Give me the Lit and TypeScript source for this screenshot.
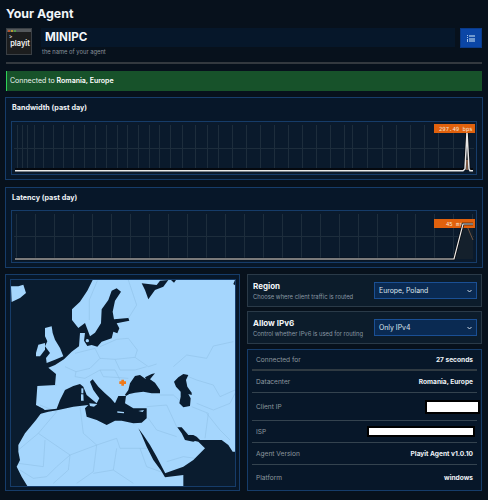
import { LitElement, html, css, svg } from "lit";
import { customElement } from "lit/decorators.js";

const SEA = "#0a1c2f";
const LAND = "#a5d6fd";

const bwGrid = [17, 22, 27, 34, 43, 53, 63, 73, 84, 95, 106, 117, 127, 138, 149, 159, 170, 182, 195, 207, 218, 232, 246, 260, 274, 288, 302, 316, 330, 344, 352, 367, 382, 396, 410, 424, 438, 453, 467];
const ltGrid = [16, 35, 54, 73, 92, 111, 130, 149, 168, 187, 206, 225, 244, 263, 282, 301, 320, 339, 358, 377, 397, 415, 434, 453, 472];

const borders = [
  "M292 32L268 90L268 150",
  "M385 30L410 105L385 145L352 150",
  "M300 230L350 208L385 205L412 240L405 262",
  "M225 250L285 235L300 265L345 268L405 262L445 290L470 282",
  "M195 290L228 305L270 295L300 265",
  "M228 305L225 320L255 325L300 300L345 300L360 330",
  "M300 300L310 320L345 322L385 325",
  "M345 268L360 300L405 300L440 290",
  "M520 290L560 255L620 265L640 228L700 215",
  "M565 320L590 330L640 345L660 380L705 360",
  "M480 375L520 375L560 410",
  "M590 400L640 420L690 400L705 370",
  "M620 430L660 480L690 510",
  "M575 410L625 430L615 505",
  "M440 410L500 405L530 470L590 505",
  "M445 445L470 480L530 500",
  "M120 405L170 425L115 490L55 540",
  "M240 410L250 490L290 525L350 505L360 535L440 535",
  "M115 490L210 555L290 525L280 605L230 640",
  "M55 580L130 590L135 510",
  "M60 600L100 625L140 620L170 590L210 555L205 600L160 640",
  "M340 600L350 535M340 600L400 640M340 600L280 610",
  "M420 535L440 590L495 610",
  "M500 575L550 560L585 565",
  "M115 345L170 345",
];

function vlines(xs: number[], y1: number, y2: number) {
  return xs.map((x) => svg`<line x1=${x} x2=${x} y1=${y1} y2=${y2}></line>`);
}

@customElement("app-root")
export class AppRoot extends LitElement {
  static styles = css`
    :host {
      display: block;
      width: 488px;
      height: 500px;
      overflow: hidden;
      background: #07111c;
      font-family: Inter, "Liberation Sans", sans-serif;
      color: #fff;
    }
    .page {
      padding: 7px 6px 0 6px;
      display: flex;
      flex-direction: column;
    }
    h1 {
      margin: 0;
      font-size: 12.4px;
      line-height: 14px;
      font-weight: 700;
      color: #f1f5f9;
    }
    .head {
      display: flex;
      gap: 9px;
      margin-top: 7px;
      align-items: flex-start;
    }
    .logo {
      width: 26px;
      height: 27px;
      background: #1c1d1e;
      border: 1px solid #3a3f44;
      box-sizing: border-box;
      display: flex;
      flex-direction: column;
      flex: none;
    }
    .logobar {
      height: 3px;
      background: #54585c;
      display: flex;
      gap: 1px;
      align-items: center;
      padding-left: 1px;
    }
    .logobar i {
      width: 2px;
      height: 2px;
      background: #b5532f;
    }
    .logobar i:nth-child(2) {
      background: #b59a2f;
    }
    .logobar i:nth-child(3) {
      background: #4f9a4a;
    }
    .logobody {
      flex: 1;
      padding: 2px 0 0 2px;
      font-size: 7.4px;
      line-height: 7px;
      font-weight: 600;
      color: #f2f2f2;
    }
    .logobody b {
      display: block;
      font-size: 5px;
      line-height: 4px;
      font-weight: 600;
    }
    .logobody span {
      display: block;
      text-align: center;
      margin-top: 2px;
    }
    .namewrap {
      flex: 1;
      min-width: 0;
    }
    .name {
      height: 19px;
      background: #06172a;
      padding-left: 4px;
      font-size: 11.6px;
      line-height: 19px;
      font-weight: 700;
      color: #f4f8fc;
    }
    .hint {
      font-size: 5.8px;
      line-height: 8px;
      margin: 1px 0 0 1px;
      color: #8a939c;
    }
    .btn {
      width: 22px;
      height: 20px;
      flex: none;
      margin-left: -4px;
      box-sizing: border-box;
      background: #0b46a6;
      border: 1px solid #0a3a88;
      display: flex;
      align-items: center;
      justify-content: center;
    }
    hr {
      border: 0;
      height: 2px;
      background: #33393f;
      margin: 6px 0 0 0;
    }
    .alert {
      margin-top: 7px;
      height: 20px;
      line-height: 19px;
      box-sizing: border-box;
      background: #17522a;
      border-left: 1px solid #2ed158;
      padding-left: 3px;
      font-size: 7px;
      color: #eef4f0;
    }
    .alert b {
      color: #fff;
      font-weight: 600;
    }
    .card {
      border: 1px solid #163c69;
      background: #071729;
      box-sizing: border-box;
      margin: 0 -1px;
    }
    .chartcard {
      margin-top: 6px;
      padding: 5px 5px 0 5px;
      height: 83px;
    }
    .chartcard + .chartcard {
      margin-top: 7px;
      height: 81px;
    }
    .chartcard h2 {
      margin: 0;
      font-size: 7.2px;
      line-height: 9px;
      font-weight: 700;
      padding-left: 1px;
      color: #f0f4f8;
    }
    .plot {
      display: block;
      margin-top: 9px;
      width: 466px;
      height: 54px;
      box-sizing: border-box;
      border: 1px solid #163c69;
      background: #0a1a2c;
    }
    .chartcard + .chartcard .plot {
      margin-top: 8px;
      height: 53px;
    }
    .plot .grid line {
      stroke: #1d2d3c;
      stroke-width: 1;
    }
    .plot text {
      font-family: "DejaVu Sans Mono", monospace;
      font-size: 5.6px;
      fill: #f4e4d6;
    }
    .bottom {
      display: flex;
      gap: 7px;
      margin: 6px -1px 0 -1px;
    }
    .mapcard {
      margin: 0;
      width: 235px;
      height: 217px;
      flex: none;
      padding: 5px;
    }
    .map {
      display: block;
      width: 224px;
      height: 206px;
      outline: 1px solid #163c69;
    }
    .side {
      flex: 1;
      display: flex;
      flex-direction: column;
      gap: 4px;
      padding-right: 1px;
    }
    .opt {
      height: 33px;
      box-sizing: border-box;
      border: 1px solid #2a3a48;
      background: #0c1c2b;
      display: flex;
      align-items: center;
      justify-content: space-between;
      padding: 0 4px 0 5px;
    }
    .opt strong {
      display: block;
      font-size: 8px;
      line-height: 10px;
      font-weight: 700;
      color: #f4f7fa;
    }
    .opt small {
      display: block;
      font-size: 5.85px;
      line-height: 8px;
      margin-top: 2px;
      color: #8a98a4;
    }
    .select {
      width: 103px;
      height: 17px;
      box-sizing: border-box;
      background: #0a2a52;
      border: 1px solid #1a4f94;
      display: flex;
      align-items: center;
      justify-content: space-between;
      padding: 0 4px;
      font-size: 6.9px;
      color: #dfe7ef;
    }
    .info {
      margin: 1px 0 0 0;
      height: 142px;
      padding: 0 4px;
    }
    .row {
      height: 22px;
      box-sizing: border-box;
      border-bottom: 1px solid #34434f;
      display: flex;
      align-items: center;
      justify-content: space-between;
      padding: 0 4px;
      font-size: 6.6px;
      color: #8d979f;
    }
    .row:first-child {
      height: 21px;
      border-bottom: 2px solid #2f3a42;
    }
    .row:last-child {
      height: 26px;
      border-bottom: 0;
    }
    .row.tall {
      height: 28px;
    }
    .row b {
      font-weight: 700;
      color: #eef3f8;
    }
    .mask {
      background: #fff;
      box-sizing: border-box;
      border: 2px solid #000;
    }
    .mask.ip {
      width: 55px;
      height: 14px;
      margin-right: -7px;
    }
    .mask.isp {
      width: 108px;
      height: 11px;
      margin-right: -2px;
    }
  `;

  private chevron() {
    return html`<svg width="5" height="4" viewBox="0 0 5 4"><path d="M.5 1 2.5 3 4.5 1" fill="none" stroke="#cfd8e2" stroke-width="1"></path></svg>`;
  }

  private map() {
    return html`<svg class="map" viewBox="33 30 672 618" preserveAspectRatio="none">
      <rect x="33" y="30" width="672" height="618" fill=${LAND}></rect>
      <g fill="none" stroke="#8dbfe4" stroke-width="1.6">
        ${borders.map((d) => svg`<path d=${d}></path>`)}
      </g>
      <g fill=${SEA}>
        <path d="M278 30L262 62L240 95L216 118L216 150L235 174L255 159L270 199L285 188L303 160L305 118L325 90L335 62L350 55L363 65L345 92L338 125L342 148L385 144L388 152L350 160L358 175L352 190L340 185L335 205L305 215L292 230L275 225L262 228L252 212L255 189L240 189L237 229L215 245L192 268L165 285L145 293L168 312L165 345L112 348L108 405L132 418L108 450L75 490L55 525L55 545L60 570L50 590L65 620L82 648L33 648L33 30Z"></path>
        <path d="M425 40L470 45L480 32L505 30L490 50L465 60L445 88L435 60Z"></path>
        <path d="M513 30L528 30L522 38Z"></path>
        <path d="M700 42L705 30L705 46Z"></path>
        <path transform="translate(120 300)" d="M-10 108L15 120L50 116L60 90L75 60L100 48L120 42L130 50L140 75L170 100L178 85L160 60L150 35L158 28L175 50L195 70L212 85L225 100L235 78L258 78L255 100L280 115L320 115L320 145L305 158L280 160L245 152L225 152L200 165L170 150L140 140L135 115L145 105L100 110L55 120L25 125L-12 135Z"></path>
        <path d="M385 360L390 340L405 318L420 315L438 328L435 322L455 312L465 310L450 328L465 338L480 360L480 370L455 370L430 365L405 368L388 372L378 378L375 374Z"></path>
        <path transform="translate(450 300)" d="M72 35L85 22L100 12L115 15L108 30L112 50L125 68L125 75L115 72L122 85L120 108L100 112L88 100L92 80L92 65L78 50Z"></path>
        <path transform="translate(450 300)" d="M82 172L95 172L115 195L130 195L140 200L150 210L215 210L235 225L248 245L255 245L255 348L100 348L100 315L45 322L45 310L100 290L130 270L165 235L145 215L135 213L130 215L105 210L95 190Z"></path>
        <path transform="translate(120 300)" d="M295 175L310 195L330 225L350 260L375 308L375 322L362 300L340 270L320 230L305 195Z"></path>
      </g>
      <g fill=${LAND}>
        <path d="M33 49L55 49L70 44L78 69L60 84L35 96Z"></path>
        <path d="M135 174L155 169L158 189L165 209L180 234L190 259L165 269L140 279L138 264L150 249L135 229L142 214L135 199Z"></path>
        <path d="M108 249L115 224L135 219L135 239L120 259L108 259Z"></path>
        <path d="M244 355L250 355L250 370L244 370Z"></path>
        <path d="M243 373L250 373L251 392L243 392Z"></path>
        <path d="M268 400L292 402L282 410L270 408Z"></path>
        <path d="M352 424L372 426L372 430L352 428Z"></path>
        <path d="M415 423L432 420L428 426Z"></path>
        <circle cx="262" cy="212" r="5"></circle>
      </g>
      <path d="M364 329h8v5h6v8h-6v5h-8v-5h-6v-8h6z" fill="#f07a1a"></path>
    </svg>`;
  }

  render() {
    return html`<div class="page">
      <h1>Your Agent</h1>
      <div class="head">
        <div class="logo">
          <div class="logobar"><i></i><i></i><i></i></div>
          <div class="logobody"><b>&gt;</b><span>playit</span></div>
        </div>
        <div class="namewrap">
          <div class="name">MINIPC</div>
          <div class="hint">the name of your agent</div>
        </div>
        <div class="btn">
          <svg width="8" height="7" viewBox="0 0 8 7"><path d="M0 0h1v1H0zM0 2h1v1H0zM0 4h1v3H0z" fill="#a9c4e6"></path><path d="M2 0h6v2H2zM2 3h6v4H2z" fill="#6f98cf"></path></svg>
        </div>
      </div>
      <hr />
      <div class="alert">Connected to <b>Romania, Europe</b></div>

      <div class="card chartcard">
        <h2>Bandwidth (past day)</h2>
        <svg class="plot" viewBox="12 122 464 52">
          <g class="grid">
            ${vlines(bwGrid.filter((x) => x < 470).map((x) => x + 0.5), 125, 170)}
            <line x1="14" x2="474" y1="148.5" y2="148.5"></line>
          </g>
          <path d="M15 169.5H463L465 169L467 132L469 169L470 169.5H473" fill="none" stroke="#05090f" stroke-width="3"></path>
          <path d="M15 170.7H463L465 169L467 132L469 169L470 170.7H473" fill="none" stroke="#e8e8e8" stroke-width="1.5"></path>
          <path d="M467 160V170" stroke="#e8a070" stroke-width="1"></path>
          <rect x="434" y="124" width="41" height="9" fill="#e0610d"></rect>
          <text x="439" y="130.5">297.49 bps</text>
        </svg>
      </div>

      <div class="card chartcard">
        <h2>Latency (past day)</h2>
        <svg class="plot" viewBox="12 211 464 51">
          <g class="grid">
            ${vlines(ltGrid.map((x) => x + 0.5), 214, 259)}
            <line x1="14" x2="474" y1="236.5" y2="236.5"></line>
          </g>
          <path d="M454 259L463 224H473V259Z" fill="#14202c"></path>
          <path d="M467 226L473 240" stroke="#6b5444" stroke-width="1"></path>
          <rect x="434" y="219" width="41" height="9" fill="#e0610d"></rect>
          <text x="446" y="225.5">45 ms</text>
          <path d="M15 259H454L463 224H473" fill="none" stroke="#05090f" stroke-width="2.6"></path>
          <path d="M15 259H454L463 224H473" fill="none" stroke="#f0ece8" stroke-width="1.2"></path>
        </svg>
      </div>

      <div class="bottom">
        <div class="card mapcard">${this.map()}</div>
        <div class="side">
          <div class="opt">
            <div><strong>Region</strong><small>Choose where client traffic is routed</small></div>
            <div class="select"><span>Europe, Poland</span>${this.chevron()}</div>
          </div>
          <div class="opt">
            <div><strong>Allow IPv6</strong><small>Control whether IPv6 is used for routing</small></div>
            <div class="select"><span>Only IPv4</span>${this.chevron()}</div>
          </div>
          <div class="card info">
            <div class="row"><span>Connected for</span><b>27 seconds</b></div>
            <div class="row"><span>Datacenter</span><b>Romania, Europe</b></div>
            <div class="row tall"><span>Client IP</span><div class="mask ip"></div></div>
            <div class="row"><span>ISP</span><div class="mask isp"></div></div>
            <div class="row"><span>Agent Version</span><b>Playit Agent v1.0.10</b></div>
            <div class="row"><span>Platform</span><b>windows</b></div>
          </div>
        </div>
      </div>
    </div>`;
  }
}
